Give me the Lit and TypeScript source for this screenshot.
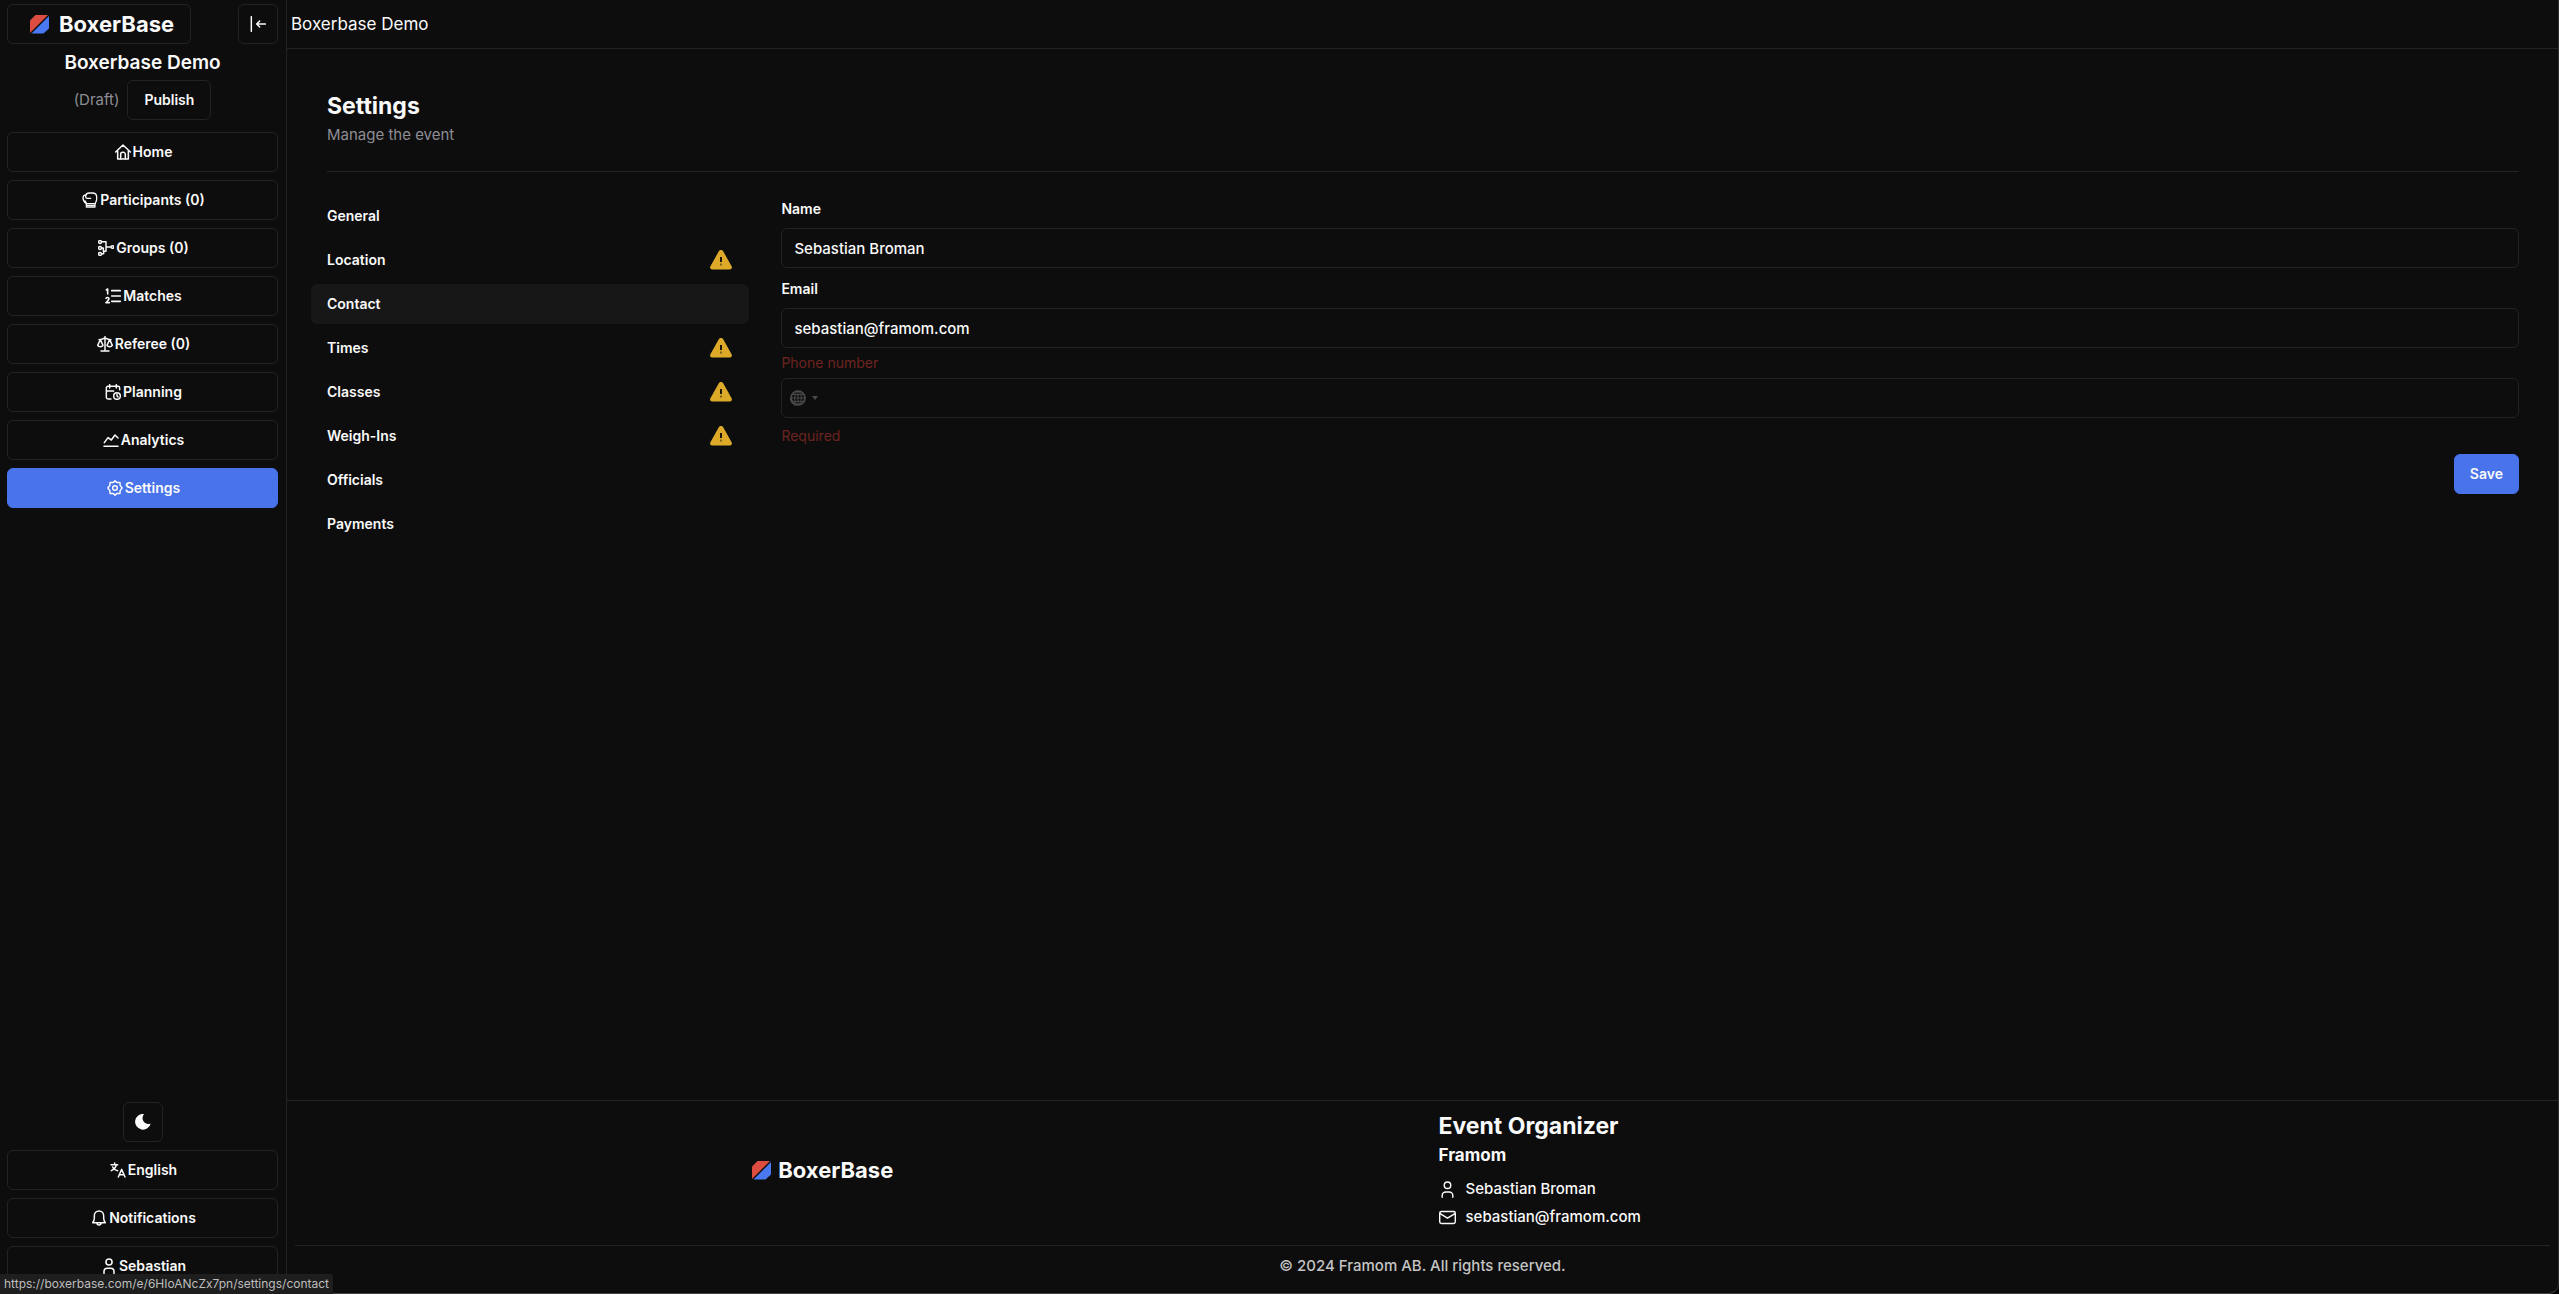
import { LitElement, html, css, svg, nothing } from "lit";
import { customElement } from "lit/decorators.js";

const strokeIcon = (body: unknown, width = "2") => html`<svg
  class="icon"
  viewBox="0 0 24 24"
  fill="none"
  stroke="currentColor"
  stroke-width=${width}
  stroke-linecap="round"
  stroke-linejoin="round"
  aria-hidden="true"
>${body}</svg>`;

const solidIcon = (body: unknown) => html`<svg
  class="icon"
  viewBox="0 0 24 24"
  fill="currentColor"
  aria-hidden="true"
>${body}</svg>`;

const userPath = svg`<circle cx="12" cy="6" r="4.600"/><path d="M4.500 23v-2.500a5 5 0 0 1 5-5h5a5 5 0 0 1 5 5V23"/>`;

const icons = {
  collapse: strokeIcon(svg`<path d="M2 1v22M23 12H10M14.500 7.500 10 12l4.500 4.500"/>`, "2.200"),
  home: strokeIcon(svg`<path d="M1 12 12 1.500l11 10.500M4 10v12.500h16V10"/><path d="M8.500 22v-6.500a3 3 0 0 1 3-3h1a3 3 0 0 1 3 3V22"/>`, "2.300"),
  glove: strokeIcon(svg`<path d="M6.500 17.500C3 15 1.500 12 1.500 8.500 1.500 6 3 4.500 5.500 4.500M5.500 5.500C6 3 8 1.500 11 1.500h4.500c4.500 0 6.500 2 6.500 6V11c0 3-1.700 4-2.200 6.500H6.500c0-1.800-.6-2.800-1.800-4.300"/><path d="M5.500 5v2.500c0 1.500 1 2 2.500 2h5"/><path d="M6.500 17.500v5h13v-5M7 20h12"/>`, "1.900"),
  groups: strokeIcon(svg`<circle cx="3" cy="3" r="2.200"/><circle cx="3" cy="12" r="2.200"/><circle cx="3" cy="21" r="2.200"/><circle cx="21.500" cy="10.500" r="2"/><path d="M5.500 2.500H12V17H8.500v3.500H6M5.500 12H8v5M12 10.500h7"/>`, "2.200"),
  matches: html`<svg class="icon" viewBox="0 0 24 24" fill="none" stroke="currentColor" stroke-linecap="round" stroke-linejoin="round" aria-hidden="true">${svg`<path stroke-width="2.400" d="M10 4h13M10 12h13M10 20h13"/><path stroke-width="2.400" d="M2 3l2-1.500V9M1.500 15.500c1-2 4.500-1.500 4.500.8C6 18 4 19.500 1.500 22H6.500"/>`}</svg>`,
  scales: strokeIcon(svg`<path d="M12 1v21M6 22.500h12M3 5.500c4 0 6-1 9-2.500C15 4.500 17 5.500 21 5.500"/><path d="M5 5.500 1 14c1.500 2.800 6.500 2.800 8 0zM19 5.500 15 14c1.500 2.800 6.500 2.800 8 0z"/>`, "2.200"),
  planning: strokeIcon(svg`<path d="M22 8.500V6a2.500 2.500 0 0 0-2.500-2.500h-15A2.500 2.500 0 0 0 2 6v14a2.500 2.500 0 0 0 2.500 2.500H9M7 1v5M17 1v5M2 10.500h11"/><circle cx="18" cy="18" r="5"/><path d="M18 15.500V18l1.500 1.500"/>`, "2.200"),
  analytics: strokeIcon(svg`<path d="M1.500 21.500h21M2 16l5.500-7.500 5 3.500L18 4.500l4.500 4.500"/>`, "2.300"),
  settings: strokeIcon(svg`<circle cx="12" cy="12" r="3.500"/><path d="M12 1.300l3 2.600 4.400-.1.300 4.300 3 3.900-3 3.900-.3 4.300-4.400-.1-3 2.600-3-2.600-4.400.1-.3-4.300-3-3.900 3-3.900.3-4.300 4.400.1z"/>`, "2.200"),
  language: strokeIcon(svg`<path d="M1.500 4h10M7 1.500V4M9.500 4C9 8 6 11 2 13M4 7.500c1.500 3 4 5 7.500 5.500"/><path d="M12.500 22.500 17.500 11l5 11.500M14 19h7"/>`, "2.200"),
  bell: strokeIcon(svg`<path d="M2.500 19h19c-1.800-2-2.500-4-2.500-7V8.500a7 7 0 0 0-14 0V12c0 3-.7 5-2.500 7zM9 19.500a3 3 0 0 0 6 0"/>`, "2.200"),
  user: strokeIcon(userPath, "2.300"),
  userThin: strokeIcon(userPath),
  mail: strokeIcon(svg`<rect x="1" y="3.500" width="22" height="17" rx="2.500"/><path d="M1.500 6.500 12 13l10.500-6.500"/>`),
  moon: solidIcon(svg`<path d="M13.500 0C12 2.500 11 5 11.500 8c.6 4 4 7 8 7 1.500 0 2.600-.2 4-.8A11.800 11.800 0 1 1 13.500 0z"/>`),
};

const warning = html`<svg class="warn" viewBox="-1 -1 24 22" role="img" aria-label="Incomplete">
  ${svg`<path class="warn-body" d="M11 0c1 0 1.700.4 2.200 1.300l8.400 15c.9 1.700 0 3.200-1.900 3.200H2.300c-1.900 0-2.800-1.500-1.900-3.200l8.400-15C9.300.4 10 0 11 0z"/><path class="warn-mark" d="M10 7h2v5h-2z"/><path class="warn-dot" d="M10 13.500h2v2h-2z"/>`}
</svg>`;

const brand = html`
  <svg class="mark" viewBox="0 0 19 19" aria-hidden="true">
    ${svg`<path fill="#dc4c40" d="M5.500 0H18L0 18V5.500z"/><path fill="#4a78f0" d="M19 1v12.500L13.500 18.500H1.500z"/>`}
  </svg>
  <span>BoxerBase</span>
`;

const mainNav = [
  { label: "Home", icon: icons.home },
  { label: "Participants (0)", icon: icons.glove },
  { label: "Groups (0)", icon: icons.groups },
  { label: "Matches", icon: icons.matches },
  { label: "Referee (0)", icon: icons.scales },
  { label: "Planning", icon: icons.planning },
  { label: "Analytics", icon: icons.analytics },
  { label: "Settings", icon: icons.settings, active: true },
];

const settingsNav = [
  { label: "General" },
  { label: "Location", warn: true },
  { label: "Contact", active: true },
  { label: "Times", warn: true },
  { label: "Classes", warn: true },
  { label: "Weigh-Ins", warn: true },
  { label: "Officials" },
  { label: "Payments" },
];

@customElement("app-root")
export class AppRoot extends LitElement {
  static styles = css`
    :host {
      display: block;
      background: #000000;
      --bg: #0d0d0d;
      --line: #232323;
      --text: #fafafa;
      --muted: #8e8d96;
      --primary: #4873eb;
      --error: #6e2420;
      font-family: Inter, "Liberation Sans", sans-serif;
      font-size: 15px;
      line-height: 24px;
      color: var(--text);
    }
    *, *::before, *::after { box-sizing: border-box; }
    h1, h2, h3, p, ul { margin: 0; padding: 0; }
    ul { list-style: none; }
    a { color: inherit; text-decoration: none; }
    button, input { font: inherit; color: inherit; }
    .page {
      display: flex;
      height: 100vh;
      overflow: hidden;
      background: var(--bg);
      border-right: 1px solid #2e2e2e;
      border-bottom: 1px solid #444444;
      border-bottom-right-radius: 10px;
    }
    .sidebar {
      display: flex;
      flex-direction: column;
      flex: none;
      width: 287px;
      padding: 4px 8px 0 7px;
      border-right: 1px solid var(--line);
    }
    .btn {
      display: flex;
      align-items: center;
      justify-content: center;
      flex: none;
      gap: 2px;
      height: 40px;
      padding: 0 15px;
      border: 1px solid var(--line);
      border-radius: 6px;
      background: transparent;
      font-size: 14px;
      line-height: 20px;
      font-weight: 600;
    }
    .btn.square { width: 40px; padding: 0; }
    .btn.primary { background: var(--primary); border-color: var(--primary); }
    .icon { flex: none; width: 16px; height: 16px; }
    .top { display: flex; justify-content: space-between; }
    .brand {
      display: flex;
      align-items: center;
      gap: 7px;
      font-size: 22px;
      line-height: 32px;
      font-weight: 700;
    }
    .brand-link {
      gap: 10px;
      width: 184px;
      height: 40px;
      padding: 0 22px;
      border: 1px solid var(--line);
      border-radius: 6px;
    }
    .mark { flex: none; width: 19px; height: 19px; }
    .event {
      margin-top: 5px;
      text-align: center;
      font-size: 19px;
      line-height: 28px;
      font-weight: 600;
    }
    .status {
      display: flex;
      align-items: center;
      justify-content: center;
      gap: 8px;
      margin-top: 3px;
      color: var(--muted);
    }
    .status .btn { padding: 0 16px; color: var(--text); }
    .stack { display: flex; flex-direction: column; gap: 8px; }
    .stack .btn { padding: 0 14px 0 16px; }
    .nav { margin-top: 12px; }
    .tools { margin-top: auto; margin-bottom: 7px; }
    .stack .btn.square { align-self: center; padding: 0; }
    .main { display: flex; flex-direction: column; flex: 1; min-width: 0; }
    .bar {
      flex: none;
      padding: 10px 4px;
      border-bottom: 1px solid var(--line);
      font-size: 17px;
      line-height: 28px;
    }
    .content { flex: 1; padding: 41px 39px 0 40px; }
    .head {
      padding-bottom: 23px;
      border-bottom: 1px solid var(--line);
    }
    .head h1 { font-size: 23px; line-height: 32px; font-weight: 700; }
    .head p { line-height: 26px; color: var(--muted); }
    .body { display: flex; gap: 48px; margin-top: 24px; }
    .aside { flex: none; width: 20%; margin: 0 -16px; }
    .aside ul { display: flex; flex-direction: column; gap: 4px; }
    .tab {
      display: flex;
      align-items: center;
      justify-content: space-between;
      height: 40px;
      padding: 0 16px;
      border-radius: 6px;
      font-size: 14px;
      line-height: 20px;
      font-weight: 600;
    }
    .tab.active { background: #171717; }
    .warn { width: 24px; height: 22px; }
    .warn-body { fill: #dda928; }
    .warn-mark { fill: #1c1606; }
    .warn-dot { fill: #7b5e17; }
    .form { display: flex; flex-direction: column; flex: 1; min-width: 0; }
    .label { font-size: 14px; line-height: 26px; font-weight: 600; }
    .label.invalid { line-height: 30px; }
    .label.invalid, .invalid { color: var(--error); font-weight: 400; }
    .field {
      display: block;
      width: 100%;
      height: 40px;
      padding: 0 12px;
      border: 1px solid var(--line);
      border-radius: 6px;
      background: transparent;
      outline: none;
      font-weight: 500;
    }
    .gap-top { margin-top: 6px; }
    .label.next { margin-top: 8px; }
    .phone { display: flex; align-items: center; padding: 0; }
    .country {
      display: flex;
      align-items: center;
      gap: 6px;
      height: 100%;
      padding: 0 8px;
      border: 0;
      background: transparent;
      color: #4b4b4b;
    }
    .globe { width: 16px; height: 16px; }
    .caret { width: 6px; height: 4px; }
    .number {
      flex: 1;
      min-width: 0;
      height: 100%;
      padding: 0;
      border: 0;
      outline: none;
      background: transparent;
    }
    .message { margin-top: 8px; font-size: 14px; line-height: 20px; }
    .save { align-self: flex-end; margin-top: 8px; }
    .footer { flex: none; padding: 0 8px; border-top: 1px solid var(--line); }
    .columns {
      display: grid;
      grid-template-columns: 1fr 1fr;
      gap: 32px;
      align-items: center;
      padding: 8px 0 14px;
      border-bottom: 1px solid var(--line);
    }
    .footer-brand { display: flex; justify-content: center; padding-right: 56px; }
    .columns h2 { font-size: 23px; line-height: 34px; font-weight: 700; }
    .columns h3 { font-size: 17px; line-height: 24px; font-weight: 700; }
    .contact { margin-top: 8px; font-weight: 500; }
    .contact li { display: flex; align-items: center; gap: 10px; line-height: 28px; }
    .contact .icon { width: 17px; height: 17px; }
    .copy {
      padding: 6px 0 13px;
      line-height: 28px;
      font-weight: 500;
      text-align: center;
      color: #c4c4c4;
    }
    .link-hint {
      position: absolute;
      left: 0;
      bottom: 0;
      padding: 0 4px;
      border-top-right-radius: 3px;
      background: #1e1e1e;
      color: #bdbdbd;
      font-size: 12px;
      line-height: 20px;
    }
  `;

  render() {
    return html`
      <div class="page">
        <aside class="sidebar">
          <div class="top">
            <a class="brand brand-link" href="#">${brand}</a>
            <button class="btn square" type="button" aria-label="Collapse sidebar">${icons.collapse}</button>
          </div>
          <h2 class="event">Boxerbase Demo</h2>
          <div class="status">
            <span>(Draft)</span>
            <button class="btn" type="button">Publish</button>
          </div>
          <nav class="stack nav" aria-label="Event">
            ${mainNav.map((item) => html`<a class="btn ${item.active ? "primary" : ""}" href="#">${item.icon}<span>${item.label}</span></a>`)}
          </nav>
          <div class="stack tools">
            <button class="btn square" type="button" aria-label="Toggle theme">${icons.moon}</button>
            <button class="btn" type="button">${icons.language}<span>English</span></button>
            <button class="btn" type="button">${icons.bell}<span>Notifications</span></button>
            <button class="btn" type="button">${icons.user}<span>Sebastian</span></button>
          </div>
        </aside>
        <div class="main">
          <header class="bar">Boxerbase Demo</header>
          <main class="content">
            <div class="head">
              <h1>Settings</h1>
              <p>Manage the event</p>
            </div>
            <div class="body">
              <nav class="aside" aria-label="Settings">
                <ul>
                  ${settingsNav.map((item) => html`<li><a class="tab ${item.active ? "active" : ""}" href="#"><span>${item.label}</span>${item.warn ? warning : nothing}</a></li>`)}
                </ul>
              </nav>
              <form class="form">
                <label class="label" for="name">Name</label>
                <input class="field gap-top" id="name" type="text" .value=${"Sebastian Broman"} />
                <label class="label next" for="email">Email</label>
                <input class="field gap-top" id="email" type="email" .value=${"sebastian@framom.com"} />
                <label class="label invalid" for="phone">Phone number</label>
                <div class="field phone">
                  <button class="country" type="button" aria-label="Country">
                    <svg class="globe" viewBox="0 0 24 24" fill="none" stroke="currentColor" aria-hidden="true">
                      ${svg`<circle cx="12" cy="12" r="10.500" stroke-width="2.500"/><ellipse cx="12" cy="12" rx="5" ry="10" stroke-width="1.500"/><path stroke-width="1.500" d="M12 2v20M2 12h20M3.500 7h17M3.500 17h17"/><path d="M1 12l2 6 6 5" stroke-width="3"/>`}
                    </svg>
                    <svg class="caret" viewBox="0 0 6 4" fill="currentColor" aria-hidden="true">${svg`<path d="M0 0h6L3 4z"/>`}</svg>
                  </button>
                  <input class="number" id="phone" type="tel" />
                </div>
                <p class="message invalid">Required</p>
                <button class="btn primary save" type="button">Save</button>
              </form>
            </div>
          </main>
          <footer class="footer">
            <div class="columns">
              <div class="footer-brand"><span class="brand">${brand}</span></div>
              <div>
                <h2>Event Organizer</h2>
                <h3>Framom</h3>
                <ul class="contact">
                  <li>${icons.userThin}<span>Sebastian Broman</span></li>
                  <li>${icons.mail}<span>sebastian@framom.com</span></li>
                </ul>
              </div>
            </div>
            <p class="copy">© 2024 Framom AB. All rights reserved.</p>
          </footer>
        </div>
        <div class="link-hint">https://boxerbase.com/e/6HIoANcZx7pn/settings/contact</div>
      </div>
    `;
  }
}
